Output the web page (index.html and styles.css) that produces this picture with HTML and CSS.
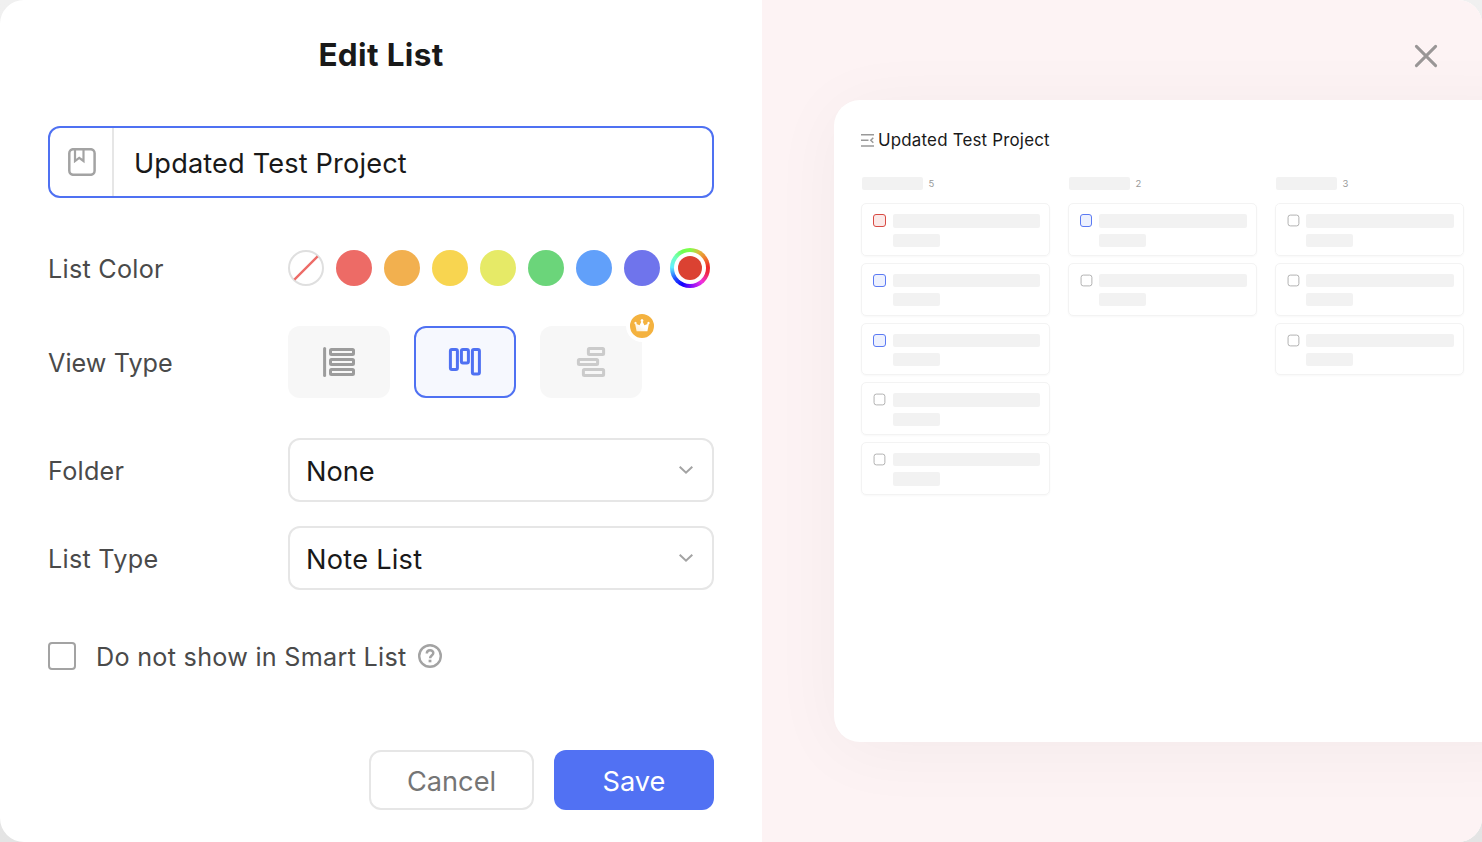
FILE: index.html
```html
<!DOCTYPE html>
<html lang="en">
<head>
<meta charset="utf-8">
<title>Edit List</title>
<link rel="stylesheet" href="styles.css">
</head>
<body>
<main class="modal">
  <section class="form">
    <h1 class="title"><span>Edit List</span></h1>
    <div class="name-field">
      <div class="name-icon">
        <svg width="28" height="28" viewBox="0 0 28 28" fill="none" stroke="#a3a3a3" stroke-width="2.2"><rect x="1.3" y="1.2" width="25.3" height="25.6" rx="4" stroke-width="2.5"/><path d="M7 2v11l4.2-3.2 4.3 3.2V2"/></svg>
      </div>
      <div class="name-text"><span>Updated Test Project</span></div>
    </div>

    <div class="row colors-row">
      <div class="label"><span class="t-color">List Color</span></div>
      <div class="colors">
        <span class="dot none"><svg width="36" height="36" viewBox="0 0 36 36"><circle cx="18" cy="18" r="17" fill="#fff" stroke="#dfdfdf" stroke-width="2"/><path d="M6.4 29.6 29.6 6.4" stroke="#ed6b66" stroke-width="2.3"/></svg></span>
        <span class="dot red"></span>
        <span class="dot orange"></span>
        <span class="dot yellow"></span>
        <span class="dot lime"></span>
        <span class="dot green"></span>
        <span class="dot blue"></span>
        <span class="dot indigo"></span>
        <span class="custom"><span class="custom-gap"><span class="custom-core"></span></span></span>
      </div>
    </div>

    <div class="row views-row">
      <div class="label"><span class="t-view">View Type</span></div>
      <div class="views">
        <div class="view">
          <svg width="34" height="32" viewBox="0 0 34 32" fill="none" stroke="#9c9c9c" stroke-width="3"><path d="M2.6 2.4v27.2" stroke-linecap="round"/><rect x="8.5" y="3.4" width="23" height="5.2" rx="1"/><rect x="8.5" y="13.4" width="23" height="5.2" rx="1"/><rect x="8.5" y="23.4" width="23" height="5.2" rx="1"/></svg>
        </div>
        <div class="view selected">
          <svg width="34" height="32" viewBox="0 0 34 32" fill="none" stroke="#4f71f2" stroke-width="3"><rect x="2.4" y="3.4" width="7" height="20" rx="1.5"/><rect x="13.4" y="3.4" width="7" height="13.5" rx="1.5"/><rect x="24.4" y="3.4" width="7" height="24.6" rx="1.5"/></svg>
        </div>
        <div class="view">
          <svg width="34" height="32" viewBox="0 0 34 32" fill="none" stroke="#cbcbcb" stroke-width="3"><rect x="14.4" y="2.6" width="15.2" height="5.8" rx="1"/><rect x="4.4" y="13.4" width="19.2" height="5.2" rx="1"/><rect x="9.4" y="23.6" width="20.2" height="5.8" rx="1"/></svg>
          <span class="crown"><svg width="24" height="24" viewBox="0 0 24 24"><defs><linearGradient id="cg" x1="1" y1="0" x2="0" y2="1"><stop offset="0.5" stop-color="#fff"/><stop offset="1" stop-color="#fbe9c8"/></linearGradient></defs><path d="M6.6 17.2 5.2 10.3a1.2 1.2 0 1 1 1.2-.3L9.6 11.3 11.3 7.8a1.4 1.4 0 1 1 1.4 0L14.4 11.3l3.2-1.3a1.2 1.2 0 1 1 1.2.3L17.4 17.2Z" fill="url(#cg)"/></svg></span>
        </div>
      </div>
    </div>

    <div class="row folder-row">
      <div class="label"><span class="t-folder">Folder</span></div>
      <div class="select"><span class="s-none">None</span><svg width="16" height="10" viewBox="0 0 16 10" fill="none" stroke="#a3a3a3" stroke-width="2"><path d="m1.7 1.7 6.3 6 6.3-6"/></svg></div>
    </div>
    <div class="row type-row">
      <div class="label"><span class="t-type">List Type</span></div>
      <div class="select"><span class="s-note">Note List</span><svg width="16" height="10" viewBox="0 0 16 10" fill="none" stroke="#a3a3a3" stroke-width="2"><path d="m1.7 1.7 6.3 6 6.3-6"/></svg></div>
    </div>

    <div class="smart">
      <span class="checkbox"></span>
      <span class="smart-text">Do not show in Smart List</span>
      <svg width="24" height="24" viewBox="0 0 24 24" fill="none" stroke="#a3a3a3"><circle cx="12" cy="12" r="10.8" stroke-width="2.4"/><path d="M8.8 9.6c0-4.5 6.5-4.3 6.5-.5 0 2.5-3.2 2.5-3.2 5.2" stroke-width="2.5"/><path d="M10.6 17h2.8" stroke-width="2.6"/></svg>
    </div>

    <div class="actions">
      <button class="btn cancel"><span>Cancel</span></button>
      <button class="btn save"><span>Save</span></button>
    </div>
  </section>

  <section class="preview">
    <svg class="close" width="24" height="24" viewBox="0 0 24 24" stroke="#999696" stroke-width="3" stroke-linecap="round"><path d="m2.4 2.4 19.2 19.2M21.6 2.4 2.4 21.6"/></svg>
    <div class="board">
      <div class="board-title">
        <svg width="13" height="13" viewBox="0 0 13 13" fill="none" stroke="#999" stroke-width="1.5"><path d="M0 .8h13M0 6.3h7.5M0 12h13M12.3 3.8 9.8 6.3 12.3 8.8"/></svg>
        <span>Updated Test Project</span>
      </div>
      <div class="columns">
        <div class="column">
          <div class="col-head"><i></i><span>5</span></div>
          <div class="card"><b class="box hot"></b><div><i></i><i class="short"></i></div></div>
          <div class="card"><b class="box mid"></b><div><i></i><i class="short"></i></div></div>
          <div class="card"><b class="box mid"></b><div><i></i><i class="short"></i></div></div>
          <div class="card"><b class="box"></b><div><i></i><i class="short"></i></div></div>
          <div class="card"><b class="box"></b><div><i></i><i class="short"></i></div></div>
        </div>
        <div class="column">
          <div class="col-head"><i></i><span>2</span></div>
          <div class="card"><b class="box mid"></b><div><i></i><i class="short"></i></div></div>
          <div class="card"><b class="box"></b><div><i></i><i class="short"></i></div></div>
        </div>
        <div class="column">
          <div class="col-head"><i></i><span>3</span></div>
          <div class="card"><b class="box"></b><div><i></i><i class="short"></i></div></div>
          <div class="card"><b class="box"></b><div><i></i><i class="short"></i></div></div>
          <div class="card"><b class="box"></b><div><i></i><i class="short"></i></div></div>
        </div>
      </div>
    </div>
  </section>
</main>
</body>
</html>
```
FILE: styles.css
```css
* { box-sizing: border-box; }
body {
  margin: 0;
  background: linear-gradient(#f0f0f0, #e4e4e4);
  font-family: Inter, "Liberation Sans", sans-serif;
  color: #191919;
}
svg { display: block; flex: none; }
.modal {
  display: flex;
  width: 1482px;
  height: 842px;
  border-radius: 24px;
  overflow: hidden;
  background: #fff;
}
.form {
  width: 762px;
  flex: none;
  padding: 34px 48px 0;
  display: flex;
  flex-direction: column;
}
.title {
  margin: 0;
  height: 40px;
  line-height: 42px;
  width: 666px;
  text-align: center;
  font-size: 31.5px;
  font-weight: 700;
  letter-spacing: 0.35px;
}
.name-field {
  margin-top: 52px;
  height: 72px;
  border: 2px solid #4f71f2;
  border-radius: 12px;
  display: flex;
}
.name-icon {
  width: 64px;
  padding-left: 2px;
  border-right: 2px solid #e6e6e6;
  display: flex;
  align-items: center;
  justify-content: center;
}
.name-text {
  padding-left: 20px;
  line-height: 71px;
  font-size: 27.2px;
  letter-spacing: 0.14px;
}
.row { display: flex; align-items: center; }
.label {
  width: 240px;
  flex: none;
  font-size: 25.2px;
  line-height: 32px;
  padding-top: 2px;
  letter-spacing: 0.27px;
  color: #4a4a4a;
}
.t-view { letter-spacing: 0.05px; }
.colors-row { margin-top: 50px; height: 40px; }
.colors { display: flex; align-items: center; gap: 12px; }
.dot { width: 36px; height: 36px; border-radius: 50%; }
.red { background: #ed6b66; }
.orange { background: #f2b04f; }
.yellow { background: #f8d550; }
.lime { background: #e6ea67; }
.green { background: #6bd57a; }
.blue { background: #61a0fa; }
.indigo { background: #6f74ec; }
.custom {
  width: 40px;
  height: 40px;
  margin-left: -2px;
  border-radius: 50%;
  background: conic-gradient(#7fff4a 0deg, #e0b83a 30deg, #f08030 55deg, #ee2a28 85deg, #f02840 105deg, #f030e0 140deg, #9010f8 172deg, #1000ff 205deg, #2050ff 235deg, #60f0ff 272deg, #70ffc0 305deg, #70ff50 335deg, #7fff4a 360deg);
  display: grid;
  place-items: center;
}
.custom-gap { width: 32px; height: 32px; border-radius: 50%; background: #fff; display: grid; place-items: center; }
.custom-core { width: 24px; height: 24px; border-radius: 50%; background: #db4232; }
.views-row { margin-top: 38px; height: 72px; }
.views { display: flex; gap: 24px; }
.view {
  position: relative;
  width: 102px;
  height: 72px;
  border-radius: 12px;
  background: #f7f7f7;
  display: grid;
  place-items: center;
}
.selected { background: #f6f8fe; border: 2px solid #4f71f2; }
.crown {
  position: absolute;
  right: -16px;
  top: -16px;
  width: 32px;
  height: 32px;
  border: 4px solid #fff;
  border-radius: 50%;
  background: #f4b23f;
}
.folder-row { margin-top: 40px; height: 64px; }
.type-row { margin-top: 24px; height: 64px; }
.select {
  flex: 1;
  height: 64px;
  border: 2px solid #e6e6e6;
  border-radius: 12px;
  padding: 0 18px 0 16px;
  display: flex;
  align-items: center;
  justify-content: space-between;
  font-size: 27.2px;
}
.select span { padding-top: 2px; }
.s-note { letter-spacing: 0.25px; }
.smart { margin-top: 50px; height: 32px; display: flex; align-items: center; color: #4a4a4a; }
.checkbox { width: 28px; height: 28px; border: 2px solid #a3a3a3; border-radius: 4px; margin-right: 20px; }
.smart-text { width: 322px; font-size: 25.2px; letter-spacing: 0.27px; padding-top: 2px; white-space: nowrap; }
.actions { margin-top: 78px; display: flex; justify-content: flex-end; gap: 20px; }
.btn {
  height: 60px;
  padding: 2px 0 0;
  border-radius: 12px;
  font: 27.2px Inter, sans-serif;
}
.cancel { width: 165px; border: 2px solid #e6e6e6; background: #fff; color: #757575; }
.save { width: 160px; border: 0; background: #5171f3; color: #fff; }

.preview {
  flex: 1;
  min-width: 0;
  background: #fdf3f4;
  overflow: hidden;
}
.close { margin: 44px 0 0 652px; }
.board {
  margin: 32px 0 0 72px;
  width: 720px;
  height: 642px;
  border-radius: 26px;
  background: #fff;
  box-shadow: 0 8px 72px rgba(0, 0, 0, 0.045);
  padding: 30px 0 0 27px;
}
.board-title { display: flex; align-items: center; height: 20px; font-size: 16.9px; letter-spacing: 0.2px; gap: 4px; }
.board-title span { white-space: nowrap; }
.columns { display: flex; gap: 18.4px; margin-top: 27px; }
.column { width: 188.6px; flex: none; display: flex; flex-direction: column; gap: 7.2px; }
.col-head { height: 19.2px; display: flex; align-items: flex-start; gap: 6px; font-size: 9.5px; line-height: 13px; color: #999; }
.col-head i { width: 61px; height: 13px; border-radius: 2px; background: #f2f2f2; margin-left: .6px; }
.card {
  height: 52.5px;
  border: 1px solid #f3f3f3;
  border-radius: 5px;
  box-shadow: 0 1px 2px rgba(0, 0, 0, 0.03);
  padding: 10px 0 0 11px;
  display: flex;
}
.box { width: 12.5px; height: 13px; margin-right: 7px; border: 1.5px solid #aaa; border-radius: 3px; background: #fff; transform: scale(.9); }
.hot { border-color: #d84a43; background: #fbe9e8; transform: none; }
.mid { border-color: #5b7af3; background: #edf1fe; transform: none; }
.card i { display: block; width: 147.4px; height: 13.2px; border-radius: 2px; background: #f2f2f2; }
.card .short { width: 47px; margin-top: 6px; }
```
